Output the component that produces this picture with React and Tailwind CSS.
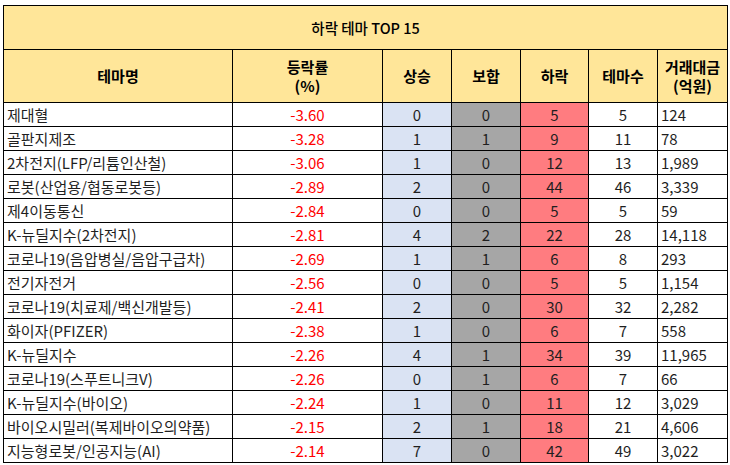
import React from 'react';

const rows = [
  ['제대혈', '-3.60', 0, 0, 5, 5, '124'],
  ['골판지제조', '-3.28', 1, 1, 9, 11, '78'],
  ['2차전지(LFP/리튬인산철)', '-3.06', 1, 0, 12, 13, '1,989'],
  ['로봇(산업용/협동로봇등)', '-2.89', 2, 0, 44, 46, '3,339'],
  ['제4이동통신', '-2.84', 0, 0, 5, 5, '59'],
  ['K-뉴딜지수(2차전지)', '-2.81', 4, 2, 22, 28, '14,118'],
  ['코로나19(음압병실/음압구급차)', '-2.69', 1, 1, 6, 8, '293'],
  ['전기자전거', '-2.56', 0, 0, 5, 5, '1,154'],
  ['코로나19(치료제/백신개발등)', '-2.41', 2, 0, 30, 32, '2,282'],
  ['화이자(PFIZER)', '-2.38', 1, 0, 6, 7, '558'],
  ['K-뉴딜지수', '-2.26', 4, 1, 34, 39, '11,965'],
  ['코로나19(스푸트니크V)', '-2.26', 0, 1, 6, 7, '66'],
  ['K-뉴딜지수(바이오)', '-2.24', 1, 0, 11, 12, '3,029'],
  ['바이오시밀러(복제바이오의약품)', '-2.15', 2, 1, 18, 21, '4,606'],
  ['지능형로봇/인공지능(AI)', '-2.14', 7, 0, 42, 49, '3,022'],
];

const font = { fontFamily: '"Noto Sans CJK KR", "Noto Sans", sans-serif' };

export default function App() {
  return (
    <div className="w-[730px] h-[465px] bg-white pt-[5px] pl-[3px]" style={font}>
      <table className="table-fixed border-collapse text-[15px] text-[#1f1f1f] w-[724px]">
        <colgroup>
          <col className="w-[229px]" />
          <col className="w-[150px]" />
          <col className="w-[69px]" />
          <col className="w-[69px]" />
          <col className="w-[68px]" />
          <col className="w-[69px]" />
          <col className="w-[70px]" />
        </colgroup>
        <thead>
          <tr className="h-[44px] bg-[#ffe699]">
            <th colSpan={7} className="border border-black font-medium text-black text-[14.5px]">하락 테마 TOP 15</th>
          </tr>
          <tr className="h-[53px] bg-[#ffe699] text-black">
            <th className="border border-black font-semibold">테마명</th>
            <th className="border border-black font-semibold leading-[19px]">등락률<br />(%)</th>
            <th className="border border-black font-semibold">상승</th>
            <th className="border border-black font-semibold">보합</th>
            <th className="border border-black font-semibold">하락</th>
            <th className="border border-black font-semibold">테마수</th>
            <th className="border border-black font-semibold leading-[19px]">거래대금<br />(억원)</th>
          </tr>
        </thead>
        <tbody>
          {rows.map((r) => (
            <tr key={r[0]} className="h-[24px]">
              <td className="border border-black pl-[3px] whitespace-nowrap leading-none">{r[0]}</td>
              <td className="border border-black text-center text-[#ff0000] leading-none">{r[1]}</td>
              <td className="border border-black text-center bg-[#dae3f3] leading-none">{r[2]}</td>
              <td className="border border-black text-center bg-[#a6a6a6] leading-none">{r[3]}</td>
              <td className="border border-black text-center bg-[#ff7c80] leading-none">{r[4]}</td>
              <td className="border border-black text-center leading-none">{r[5]}</td>
              <td className="border border-black pl-[3px] leading-none">{r[6]}</td>
            </tr>
          ))}
        </tbody>
      </table>
    </div>
  );
}
